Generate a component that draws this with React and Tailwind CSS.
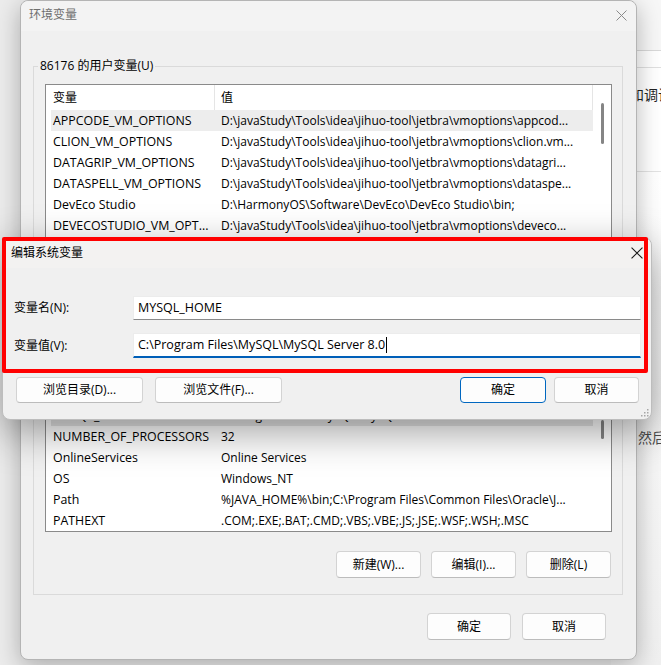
import React from 'react';

const topRows = [
  ['APPCODE_VM_OPTIONS', 'D:\\javaStudy\\Tools\\idea\\jihuo-tool\\jetbra\\vmoptions\\appcod...', 'bg-[#ededed]'],
  ['CLION_VM_OPTIONS', 'D:\\javaStudy\\Tools\\idea\\jihuo-tool\\jetbra\\vmoptions\\clion.vm...'],
  ['DATAGRIP_VM_OPTIONS', 'D:\\javaStudy\\Tools\\idea\\jihuo-tool\\jetbra\\vmoptions\\datagri...'],
  ['DATASPELL_VM_OPTIONS', 'D:\\javaStudy\\Tools\\idea\\jihuo-tool\\jetbra\\vmoptions\\dataspe...'],
  ['DevEco Studio', 'D:\\HarmonyOS\\Software\\DevEco\\DevEco Studio\\bin;'],
  ['DEVECOSTUDIO_VM_OPT...', 'D:\\javaStudy\\Tools\\idea\\jihuo-tool\\jetbra\\vmoptions\\deveco...'],
];

const bottomRows = [
  ['MYSQL_HOME', 'C:\\Program Files\\MySQL\\MySQL Server 8.0', 'bg-[#e5e5e5]'],
  ['NUMBER_OF_PROCESSORS', '32'],
  ['OnlineServices', 'Online Services'],
  ['OS', 'Windows_NT'],
  ['Path', '%JAVA_HOME%\\bin;C:\\Program Files\\Common Files\\Oracle\\J...'],
  ['PATHEXT', '.COM;.EXE;.BAT;.CMD;.VBS;.VBE;.JS;.JSE;.WSF;.WSH;.MSC'],
];

const Row = ({ name, value, bg }) => (
  <div className={`flex h-[21px] items-center leading-[21px] ${bg || 'bg-white'}`}>
    <div className="w-[163px] shrink-0 overflow-hidden whitespace-nowrap pl-[2px] text-[12.4px]">{name}</div>
    <div className="min-w-0 flex-1 overflow-hidden whitespace-nowrap pl-[7px]">{value}</div>
  </div>
);

const Btn = ({ children, w, primary }) => (
  <button
    className={`${w} h-full shrink-0 rounded-[4px] border bg-[#fdfdfd] text-[12px] text-black ${
      primary ? 'border-[#0067c0]' : 'border-[#d3d3d3] border-b-[#bcbcbc]'
    }`}
  >
    {children}
  </button>
);

const CloseX = ({ className, size = 11 }) => (
  <svg width={size} height={size} viewBox="0 0 11 11" className={className}>
    <path d="M0.5 0.5 L10.5 10.5 M10.5 0.5 L0.5 10.5" stroke="currentColor" strokeWidth="1" fill="none" />
  </svg>
);

export default function App() {
  return (
    <div className="relative h-[665px] w-[661px] overflow-hidden bg-[#ececec] font-['Open_Sans','Noto_Sans_CJK_SC',sans-serif] text-[12px] text-black">
      {/* web page behind, right edge */}
      <div className="absolute right-0 top-0 flex h-full w-[50px] flex-col overflow-hidden whitespace-nowrap bg-white">
        <div className="h-[51px] shrink-0 border-b border-[#d9d9d9] bg-[#f7f7f7]" />
        <div className="h-[17px] shrink-0 border-b border-[#e0e0e0]" />
        <div className="h-[104px] shrink-0 border-b border-[#e3e3e3] pl-[19px] pt-[17px] text-[14px] leading-[20px] text-[#222]">
          和调试
        </div>
        <div className="flex-1 bg-gradient-to-b from-white to-[#f0f0f0] pl-[27px] pt-[256px] text-[14px] leading-[20px] text-[#4d4d4d]">
          然后
        </div>
      </div>

      {/* 环境变量 window */}
      <div className="absolute left-[20px] top-0 flex h-[660px] w-[617px] flex-col rounded-lg border border-[#b4b4b4] bg-[#f0f0f0] shadow-[0_6px_24px_rgba(0,0,0,0.28)]">
        <div className="flex h-[30px] shrink-0 items-center justify-between rounded-t-lg bg-[#f3f3f3] pb-[2px] pl-[8px] pr-[9px] text-[#6e6e6e]">
          <span>环境变量</span>
          <CloseX className="text-[#8a8a8a]" />
        </div>

        <fieldset className="ml-[12px] mt-[27px] w-[590px] border border-[#dadada] pb-[16px] pl-[11px] pr-[10px] pt-[10px]">
          <legend className="-ml-[7px] px-[2px] leading-[16px]">86176 的用户变量(U)</legend>

          <div className="flex h-[448px] border border-[#8a8a8a] bg-white">
            <div className="flex min-w-0 flex-1 flex-col">
              <div className="flex h-[25px] shrink-0 items-center border-r border-[#e5e5e5]">
                <div className="w-[168px] shrink-0 pl-[7px]">变量</div>
                <div className="flex h-full flex-1 items-center border-l border-[#e5e5e5] pl-[6px]">值</div>
              </div>
              <div className="flex flex-col pl-[5px]">
                {topRows.map(([n, v, bg]) => (
                  <Row key={n} name={n} value={v} bg={bg} />
                ))}
                <div className="h-[169px]" />
                {bottomRows.map(([n, v, bg]) => (
                  <Row key={n} name={n} value={v} bg={bg} />
                ))}
              </div>
            </div>
            <div className="flex w-[18px] shrink-0 flex-col items-center">
              <div className="mt-[18px] h-[41px] w-[3px] rounded-full bg-[#858585]" />
              <div className="mt-[276px] h-[19px] w-[3px] rounded-full bg-[#858585]" />
            </div>
          </div>

          <div className="mt-[19px] flex h-[27px] justify-end gap-[10px] pr-[1px]">
            <Btn w="w-[85px]">新建(W)...</Btn>
            <Btn w="w-[85px]">编辑(I)...</Btn>
            <Btn w="w-[85px]">删除(L)</Btn>
          </div>
        </fieldset>

        <div className="mt-[18px] flex h-[27px] justify-end gap-[11px] pr-[30px]">
          <Btn w="w-[84px]">确定</Btn>
          <Btn w="w-[84px]">取消</Btn>
        </div>
      </div>

      {/* 编辑系统变量 dialog */}
      <div className="absolute left-[2px] top-[237px] flex h-[183px] w-[650px] flex-col rounded-lg border border-[#bdbdbd] bg-[#f0f0f0] shadow-[0_12px_40px_rgba(0,0,0,0.38)]">
        <div className="flex h-[30px] shrink-0 items-center justify-between rounded-t-lg bg-[#f3f2f1] pl-[8px] pr-[8px]">
          <span>编辑系统变量</span>
          <CloseX size={12} className="text-[#1a1a1a]" />
        </div>

        <div className="flex flex-col pl-[11px] pr-[10px] pt-[28px]">
          <div className="flex h-[24px] items-center">
            <div className="w-[119px] shrink-0">变量名(N):</div>
            <div className="flex h-full w-[508px] items-center border border-[#ececec] border-b-[#8a8a8a] bg-white pl-[4px] text-[12.5px]">
              MYSQL_HOME
            </div>
          </div>
          <div className="mt-[13px] flex h-[25px] items-center">
            <div className="w-[119px] shrink-0">变量值(V):</div>
            <div className="flex h-full w-[508px] items-center border border-[#ececec] border-b-2 border-b-[#005fb8] bg-white pl-[4px] text-[12.5px]">
              <span>C:\Program Files\MySQL\MySQL Server 8.0</span>
              <span className="ml-px h-[16px] w-px bg-black" />
            </div>
          </div>
        </div>

        <div className="mt-[19px] flex h-[26px] pl-[13px] pr-[12px]">
          <Btn w="w-[127px]">浏览目录(D)...</Btn>
          <div className="w-[12px]" />
          <Btn w="w-[127px]">浏览文件(F)...</Btn>
          <div className="flex-1" />
          <Btn w="w-[86px]" primary>确定</Btn>
          <div className="w-[8px]" />
          <Btn w="w-[85px]">取消</Btn>
        </div>

        {/* red annotation frame */}
        <div className="pointer-events-none absolute -left-px -top-px h-[136px] w-[646px] rounded-[2px] border-[4px] border-[#ff0000]" />

        {/* resize gripper */}
        <svg width="9" height="9" viewBox="0 0 9 9" className="absolute bottom-[2px] right-[2px] text-[#a6a6a6]">
          <rect x="7" y="1" width="1.5" height="1.5" fill="currentColor" />
          <rect x="4" y="4" width="1.5" height="1.5" fill="currentColor" />
          <rect x="7" y="4" width="1.5" height="1.5" fill="currentColor" />
          <rect x="1" y="7" width="1.5" height="1.5" fill="currentColor" />
          <rect x="4" y="7" width="1.5" height="1.5" fill="currentColor" />
          <rect x="7" y="7" width="1.5" height="1.5" fill="currentColor" />
        </svg>
      </div>
    </div>
  );
}
